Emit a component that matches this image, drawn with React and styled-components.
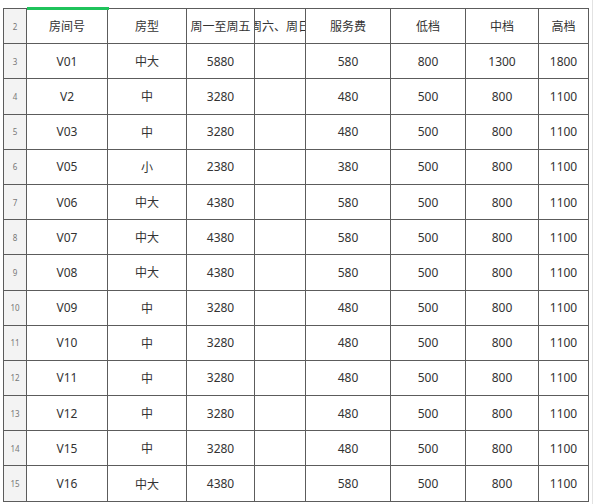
import React from 'react';
import styled, { createGlobalStyle } from 'styled-components';

const GlobalStyle = createGlobalStyle`
  html, body {
    margin: 0;
    padding: 0;
    background: #fff;
  }
  body {
    font-family: "Noto Sans", "Noto Sans CJK SC", sans-serif;
    overflow: hidden;
  }
`;

const Page = styled.div`
  width: 593px;
  height: 504px;
  padding: 8px 0 0 3px;
  box-sizing: border-box;
  position: relative;
  overflow: hidden;
`;

const Sheet = styled.div`
  display: grid;
  grid-template-columns: 23px 81px 79px 68px 51px 85px 75px 73px 50px;
  grid-auto-rows: 35.2px;
  width: max-content;
  border-top: 1px solid #5c5c5c;
  border-left: 1px solid #5c5c5c;
  position: relative;
`;

const Cell = styled.div`
  box-sizing: border-box;
  border-right: 1px solid #5c5c5c;
  border-bottom: 1px solid #5c5c5c;
  display: flex;
  align-items: center;
  justify-content: center;
  overflow: hidden;
  white-space: nowrap;
  font-size: 12px;
  color: #333;
  position: relative;
`;

const RowNum = styled(Cell)`
  background: #f3f3f3;
  color: #777;
  font-size: 8px;
`;

/* active column marker on the header cell */
const SelectMark = styled.div`
  position: absolute;
  top: -2px;
  left: 23px;
  width: 82px;
  height: 3px;
  background: #1fc35b;
  z-index: 1;
`;

const EdgeLine = styled.div`
  position: absolute;
  top: 0;
  right: 0;
  width: 1px;
  height: 100%;
  background: #e2e2e2;
`;

const header = ['房间号', '房型', '周一至周五', '周六、周日', '服务费', '低档', '中档', '高档'];

const rows = [
  ['V01', '中大', '5880', '', '580', '800', '1300', '1800'],
  ['V2', '中', '3280', '', '480', '500', '800', '1100'],
  ['V03', '中', '3280', '', '480', '500', '800', '1100'],
  ['V05', '小', '2380', '', '380', '500', '800', '1100'],
  ['V06', '中大', '4380', '', '580', '500', '800', '1100'],
  ['V07', '中大', '4380', '', '580', '500', '800', '1100'],
  ['V08', '中大', '4380', '', '580', '500', '800', '1100'],
  ['V09', '中', '3280', '', '480', '500', '800', '1100'],
  ['V10', '中', '3280', '', '480', '500', '800', '1100'],
  ['V11', '中', '3280', '', '480', '500', '800', '1100'],
  ['V12', '中', '3280', '', '480', '500', '800', '1100'],
  ['V15', '中', '3280', '', '480', '500', '800', '1100'],
  ['V16', '中大', '4380', '', '580', '500', '800', '1100'],
];

export default function App() {
  return (
    <>
      <GlobalStyle />
      <Page>
        <Sheet>
          <SelectMark />
          <RowNum>2</RowNum>
          {header.map((h, i) => (
            <Cell key={i}>{h}</Cell>
          ))}
          {rows.map((r, ri) => (
            <React.Fragment key={ri}>
              <RowNum>{ri + 3}</RowNum>
              {r.map((v, ci) => (
                <Cell key={ci}>{v}</Cell>
              ))}
            </React.Fragment>
          ))}
        </Sheet>
        <EdgeLine />
      </Page>
    </>
  );
}
